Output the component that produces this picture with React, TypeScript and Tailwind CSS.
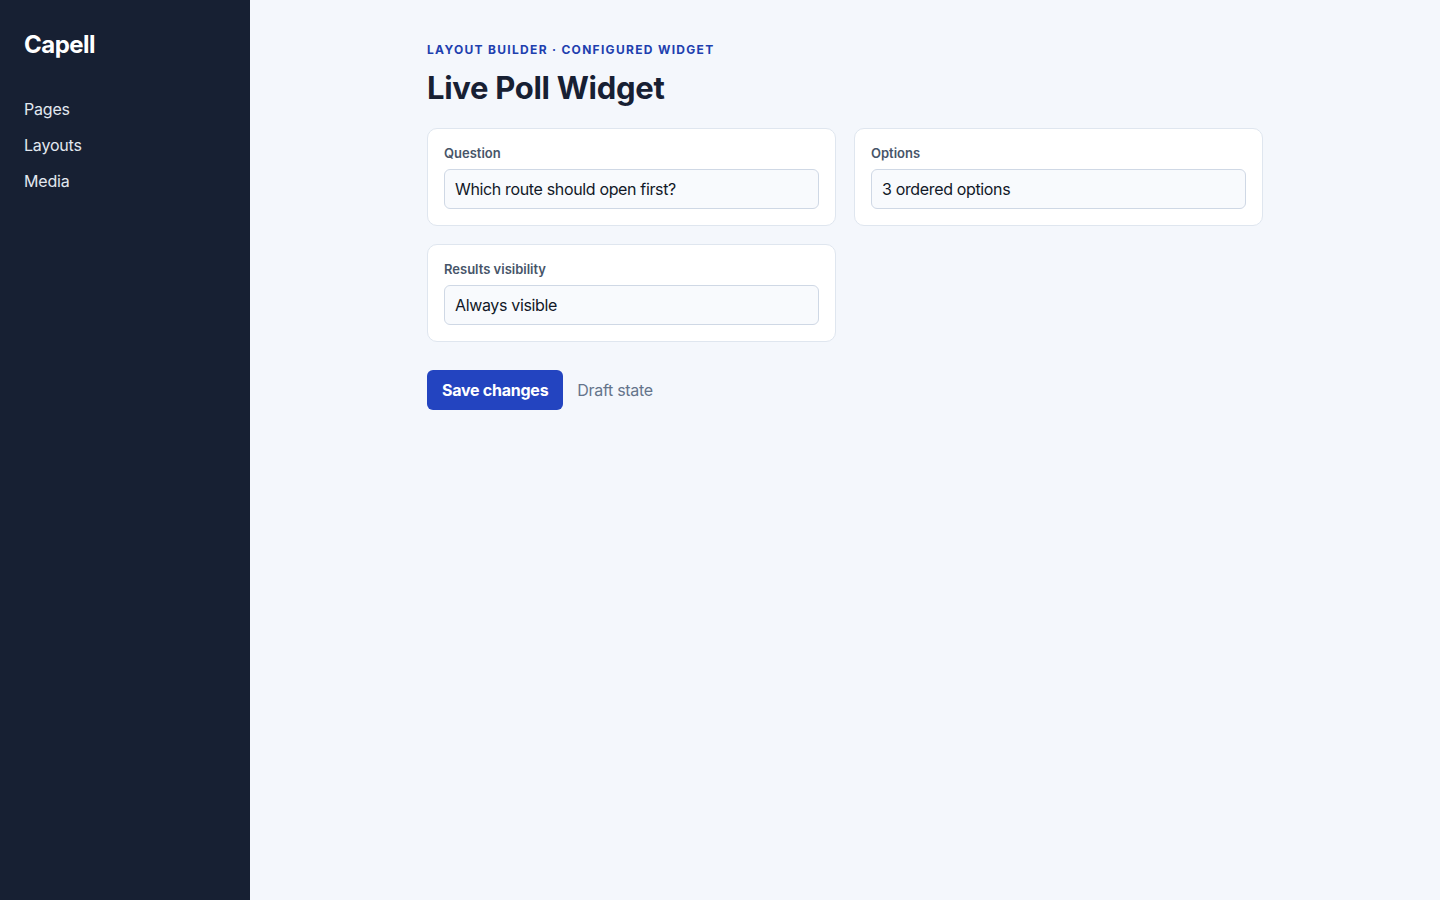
import React from "react";

function Field({ label, value }: { label: string; value: string }) {
  return (
    <div className="rounded-[10px] border border-[#dfe6ef] bg-white px-4 pt-4 pb-[16px]">
      <div className="mb-[8px] text-[13px] font-semibold leading-[16px] text-[#475569]">{label}</div>
      <div className="flex h-10 items-center rounded-md border border-[#cfd8e5] bg-[#f8fafd] px-[10px] text-[16px] tracking-[-0.35px] text-[#111827]">
        {value}
      </div>
    </div>
  );
}

export default function App() {
  return (
    <div
      className="flex min-h-[900px] w-full bg-[#f4f7fc]"
      style={{ fontFamily: "Inter, 'Noto Sans', sans-serif" }}
    >
      <aside className="w-[250px] shrink-0 bg-[#172033] px-6 pt-[31px]">
        <div className="text-[24px] font-bold leading-[28px] tracking-[-0.5px] text-white">Capell</div>
        <nav className="mt-[32px] flex flex-col">
          <a className="h-9 text-[16px] leading-9 tracking-[-0.2px] text-[#e2e8f0]">Pages</a>
          <a className="h-9 text-[16px] leading-9 tracking-[-0.2px] text-[#e2e8f0]">Layouts</a>
          <a className="h-9 text-[16px] leading-9 tracking-[-0.2px] text-[#e2e8f0]">Media</a>
        </nav>
      </aside>
      <main className="flex-1">
        <div className="mx-auto w-[836px] pt-[42px]">
          <div className="text-[12px] font-bold uppercase leading-[15px] tracking-[1.3px] text-[#1e40af]">
            Layout builder · Configured widget
          </div>
          <h1 className="mt-[12px] text-[31px] font-bold leading-[38px] tracking-[-0.3px] text-[#172033]">
            Live Poll Widget
          </h1>
          <div className="mt-[21px] grid grid-cols-2 gap-[18px]">
            <Field label="Question" value="Which route should open first?" />
            <Field label="Options" value="3 ordered options" />
            <Field label="Results visibility" value="Always visible" />
          </div>
          <div className="mt-7 flex items-center gap-[14px]">
            <button className="h-10 rounded-md bg-[#2344c0] px-[15px] text-[16px] font-bold tracking-[-0.25px] text-white">
              Save changes
            </button>
            <span className="text-[16px] tracking-[-0.3px] text-[#64748b]">Draft state</span>
          </div>
        </div>
      </main>
    </div>
  );
}
